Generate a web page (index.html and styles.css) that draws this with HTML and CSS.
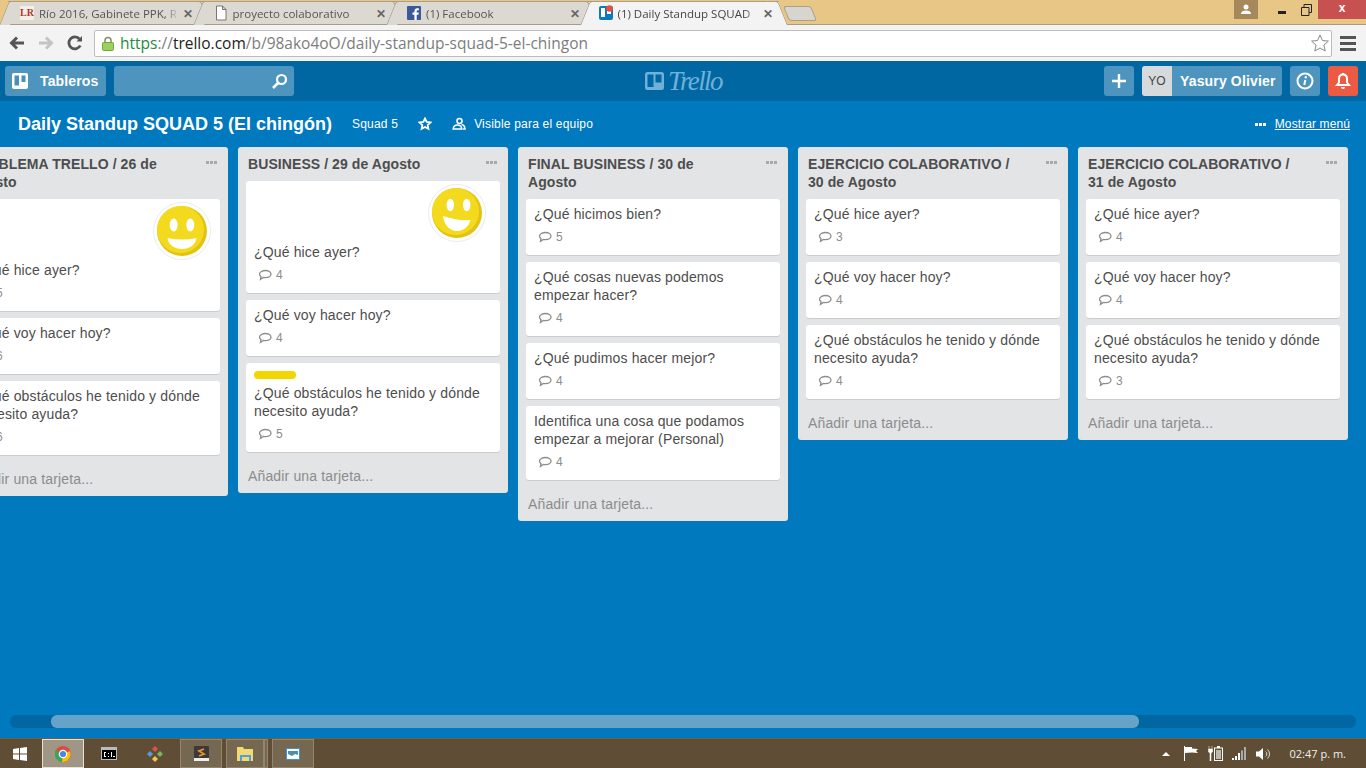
FILE: index.html
```html
<!DOCTYPE html>
<html lang="es">
<head>
    <meta charset="UTF-8">
    <title>Daily Standup SQUAD 5 (El chingón)</title>
    <link rel="stylesheet" href="styles.css">
</head>
<body>

<svg class="defs" width="0" height="0">
    <symbol id="bubble" viewBox="0 0 14 12">
        <path d="M7.500 1.500c3 0 5.500 1.500 5.500 3.600S10.500 8.700 7.500 8.700c-.8 0-1.500-.1-2.200-.3L2.500 10.300l.5-2.700C2 7 1.500 6.100 1.500 5.100c0-2.100 3-3.600 6-3.600z" fill="none" stroke="#8c8c8c" stroke-width="1.300"/>
    </symbol>
    <symbol id="smile-straight" viewBox="0 0 58 58">
        <circle cx="29" cy="29" r="28.500" fill="#fff" stroke="#ececec"/>
        <circle cx="29" cy="29" r="25" fill="#e3c30e"/>
        <circle cx="27.500" cy="27.500" r="23.500" fill="#f4da1f"/>
        <ellipse cx="20.700" cy="23" rx="4" ry="6.500" fill="#fff"/>
        <ellipse cx="37.300" cy="23" rx="4" ry="6.500" fill="#fff"/>
        <path d="M14.500 36q14.500 3 29 0c-1 7-7 11-14.500 11S15.500 43 14.500 36z" fill="#fff"/>
    </symbol>
    <symbol id="smile-tilted" viewBox="0 0 58 58">
        <circle cx="29" cy="29" r="28.500" fill="#fff" stroke="#ececec"/>
        <circle cx="29" cy="29" r="25" fill="#e3c30e"/>
        <circle cx="27.500" cy="27.500" r="23.500" fill="#f4da1f"/>
        <ellipse cx="22.300" cy="21" rx="3.700" ry="6.200" fill="#fff"/>
        <ellipse cx="38.700" cy="21" rx="3.700" ry="6.200" fill="#fff"/>
        <path d="M15 32q14 5 27.500 4c-2 7-7 11-13.500 11C22 47 16 41 15 32z" fill="#fff"/>
    </symbol>
</svg>

<div class="tabstrip">
    <div class="tab">
        <span class="fav fav-lr">LR</span>
        <span class="tab-title">Río 2016, Gabinete PPK, R</span>
        <span class="tab-close">✕</span>
    </div>
    <div class="tab">
        <svg class="fav" viewBox="0 0 14 16"><path d="M2.500 1h6l3.500 3.500V15h-9.500z M8.500 1v3.500H12" fill="#fff" stroke="#777"/></svg>
        <span class="tab-title">proyecto colaborativo</span>
        <span class="tab-close">✕</span>
    </div>
    <div class="tab">
        <svg class="fav" viewBox="0 0 14 14"><rect width="14" height="14" rx="1" fill="#3b5998"/><path d="M9.700 14V8.700h1.800l.3-2.100H9.700V5.300c0-.6.2-1 1-1h1.200V2.400c-.2 0-.9-.1-1.700-.1-1.700 0-2.800 1-2.800 2.900v1.400H5.500v2.100h1.900V14z" fill="#fff"/></svg>
        <span class="tab-title">(1) Facebook</span>
        <span class="tab-close">✕</span>
    </div>
    <div class="tab tab-active">
        <svg class="fav" viewBox="0 0 14 16"><rect y="1" width="14" height="14" rx="2" fill="#0a79bf"/><rect x="2" y="3" width="4" height="9" fill="#fff"/><rect x="8" y="3" width="4" height="6" fill="#fff"/><circle cx="10.500" cy="3.500" r="3.300" fill="#e8503a"/></svg>
        <span class="tab-title">(1) Daily Standup SQUAD</span>
        <span class="tab-close">✕</span>
    </div>
    <div class="newtab"></div>
    <div class="win-controls">
        <div class="win-user"><svg width="12" height="11" viewBox="0 0 12 11"><circle cx="6" cy="3" r="2.500" fill="#fff"/><path d="M1 10c0-2.500 2-3.500 5-3.500s5 1 5 3.500z" fill="#fff"/></svg></div>
        <div class="win-btn"><span class="win-min"></span></div>
        <div class="win-btn"><svg width="11" height="12" viewBox="0 0 11 12"><path d="M.5 3.500h7.500v8H.5z M3 3.500V.5h7.500v8H8" fill="none" stroke="#222"/></svg></div>
        <div class="win-close">x</div>
    </div>
</div>

<div class="toolbar">
    <svg class="nav-icon" viewBox="0 0 16 16"><path d="M15 8H3 M8 2.500L2.500 8 8 13.500" fill="none" stroke="#555" stroke-width="3"/></svg>
    <svg class="nav-icon" viewBox="0 0 16 16"><path d="M1 8h12 M8 2.500L13.500 8 8 13.500" fill="none" stroke="#c4c4c4" stroke-width="3"/></svg>
    <svg class="nav-icon" viewBox="0 0 16 16"><path d="M13.300 10.500A6 6 0 1 1 12.500 4" fill="none" stroke="#555" stroke-width="2.800"/><path d="M9.500 6.500h5.500V1z" fill="#555"/></svg>
    <div class="omnibox">
        <svg class="lock" viewBox="0 0 12 15"><path d="M3 7V4.500a3 3 0 0 1 6 0V7" fill="none" stroke="#8a8a6a" stroke-width="1.500"/><rect x=".5" y="6.500" width="11" height="8" rx="1" fill="#9bd25f" stroke="#6fa63c"/></svg>
        <span class="url"><span class="url-https">https</span><span class="url-dim">://</span><span class="url-host">trello.com</span><span class="url-dim">/b/98ako4oO/daily-standup-squad-5-el-chingon</span></span>
        <svg class="url-star" viewBox="0 0 18 18"><path d="M9 1l2.400 5.500 6 .6-4.500 4 1.300 5.900L9 14l-5.200 3 1.300-5.900-4.500-4 6-.6z" fill="#fff" stroke="#8a8a8a"/></svg>
    </div>
    <div class="menu-btn"><span></span><span></span><span></span></div>
</div>

<header class="topbar">
    <div class="top-left">
        <div class="hbtn hbtn-boards">
            <svg width="16" height="16" viewBox="0 0 16 16"><rect width="16" height="16" rx="2" fill="#fff"/><rect x="2.500" y="2.500" width="4.500" height="10" fill="#4d8fbc"/><rect x="9.500" y="2.500" width="4" height="6.500" fill="#4d8fbc"/></svg>
            <span>Tableros</span>
        </div>
        <div class="hbtn search">
            <svg width="17" height="17" viewBox="0 0 17 17"><circle cx="10.500" cy="6.500" r="4.500" fill="none" stroke="#fff" stroke-width="2.200"/><path d="M7 10l-5 5" stroke="#fff" stroke-width="2.600"/></svg>
        </div>
    </div>
    <div class="logo">
        <svg width="19" height="18" viewBox="0 0 19 18"><rect width="19" height="18" rx="2.500" fill="#6fb1d9"/><rect x="2.500" y="2.500" width="6" height="12.500" fill="#0067a3"/><rect x="10.500" y="2.500" width="6" height="8" fill="#0067a3"/></svg>
        <span class="logo-text">Trello</span>
    </div>
    <div class="top-right">
        <div class="hbtn hbtn-square"><svg width="16" height="16" viewBox="0 0 16 16"><path d="M8 1v14M1 8h14" stroke="#fff" stroke-width="2.400"/></svg></div>
        <div class="hbtn member">
            <span class="avatar">YO</span>
            <span class="member-name">Yasury Olivier</span>
        </div>
        <div class="hbtn hbtn-square"><svg width="18" height="18" viewBox="0 0 18 18"><circle cx="9" cy="9" r="7.500" fill="none" stroke="#fff" stroke-width="2"/><circle cx="9.800" cy="5.300" r="1.200" fill="#fff"/><path d="M9.300 8l-1 5" stroke="#fff" stroke-width="2"/></svg></div>
        <div class="hbtn hbtn-square hbtn-alert"><svg width="16" height="18" viewBox="0 0 16 18"><path d="M8 2.500c2.800 0 4 2 4 4.500v3.500l2 2.500H2l2-2.500V7c0-2.500 1.200-4.500 4-4.500z" fill="none" stroke="#fff" stroke-width="2"/><path d="M6 15h4a2 2 0 0 1-4 0z M7 1h2v2H7z" fill="#fff"/></svg></div>
    </div>
</header>

<main class="board">
    <div class="board-head">
        <h1 class="board-title">Daily Standup SQUAD 5 (El chingón)</h1>
        <span class="board-team">Squad 5</span>
        <svg class="board-star" viewBox="0 0 14 14"><path d="M7 1.500l1.700 3.500 3.800.5-2.800 2.600.7 3.800L7 10l-3.400 1.900.7-3.800L1.500 5.500 5.300 5z" fill="none" stroke="#fff" stroke-width="1.800"/></svg>
        <svg class="board-vis" viewBox="0 0 14 14"><circle cx="7.500" cy="4" r="2.500" fill="none" stroke="#fff" stroke-width="1.600"/><path d="M1.200 12c.3-2.800 2-4 4.300-4s4 1.200 4.300 4z" fill="none" stroke="#fff" stroke-width="1.600"/><path d="M9.500 7.500c2 .2 3.200 1.800 3.500 4.500h-2" fill="none" stroke="#fff" stroke-width="1.600"/></svg>
        <span class="board-vis-text">Visible para el equipo</span>
        <svg class="board-dots" viewBox="0 0 11 3"><path d="M0 0h3v3H0z M4 0h3v3H4z M8 0h3v3H8z" fill="#fff"/></svg>
        <a class="board-menu">Mostrar menú</a>
    </div>

    <div class="lists">
        <section class="list">
            <div class="list-head"><h2>PROBLEMA TRELLO / 26 de Agosto</h2><svg class="list-dots" viewBox="0 0 11 3"><path d="M0 0h3v3H0z M4 0h3v3H4z M8 0h3v3H8z"/></svg></div>
            <article class="card">
                <div class="sticker-row sticker-first"><svg class="sticker"><use href="#smile-straight"/></svg></div>
                <p>¿Qué hice ayer?</p>
                <div class="badge"><svg><use href="#bubble"/></svg>5</div>
            </article>
            <article class="card">
                <p>¿Qué voy hacer hoy?</p>
                <div class="badge"><svg><use href="#bubble"/></svg>6</div>
            </article>
            <article class="card">
                <p>¿Qué obstáculos he tenido y dónde necesito ayuda?</p>
                <div class="badge"><svg><use href="#bubble"/></svg>6</div>
            </article>
            <div class="add-card">Añadir una tarjeta...</div>
        </section>

        <section class="list">
            <div class="list-head"><h2>BUSINESS / 29 de Agosto</h2><svg class="list-dots" viewBox="0 0 11 3"><path d="M0 0h3v3H0z M4 0h3v3H4z M8 0h3v3H8z"/></svg></div>
            <article class="card">
                <div class="sticker-row"><svg class="sticker"><use href="#smile-tilted"/></svg></div>
                <p>¿Qué hice ayer?</p>
                <div class="badge"><svg><use href="#bubble"/></svg>4</div>
            </article>
            <article class="card">
                <p>¿Qué voy hacer hoy?</p>
                <div class="badge"><svg><use href="#bubble"/></svg>4</div>
            </article>
            <article class="card">
                <div class="label"></div>
                <p>¿Qué obstáculos he tenido y dónde necesito ayuda?</p>
                <div class="badge"><svg><use href="#bubble"/></svg>5</div>
            </article>
            <div class="add-card">Añadir una tarjeta...</div>
        </section>

        <section class="list">
            <div class="list-head"><h2>FINAL BUSINESS / 30 de Agosto</h2><svg class="list-dots" viewBox="0 0 11 3"><path d="M0 0h3v3H0z M4 0h3v3H4z M8 0h3v3H8z"/></svg></div>
            <article class="card">
                <p>¿Qué hicimos bien?</p>
                <div class="badge"><svg><use href="#bubble"/></svg>5</div>
            </article>
            <article class="card">
                <p>¿Qué cosas nuevas podemos empezar hacer?</p>
                <div class="badge"><svg><use href="#bubble"/></svg>4</div>
            </article>
            <article class="card">
                <p>¿Qué pudimos hacer mejor?</p>
                <div class="badge"><svg><use href="#bubble"/></svg>4</div>
            </article>
            <article class="card">
                <p>Identifica una cosa que podamos empezar a mejorar (Personal)</p>
                <div class="badge"><svg><use href="#bubble"/></svg>4</div>
            </article>
            <div class="add-card">Añadir una tarjeta...</div>
        </section>

        <section class="list">
            <div class="list-head"><h2>EJERCICIO COLABORATIVO / 30 de Agosto</h2><svg class="list-dots" viewBox="0 0 11 3"><path d="M0 0h3v3H0z M4 0h3v3H4z M8 0h3v3H8z"/></svg></div>
            <article class="card">
                <p>¿Qué hice ayer?</p>
                <div class="badge"><svg><use href="#bubble"/></svg>3</div>
            </article>
            <article class="card">
                <p>¿Qué voy hacer hoy?</p>
                <div class="badge"><svg><use href="#bubble"/></svg>4</div>
            </article>
            <article class="card">
                <p>¿Qué obstáculos he tenido y dónde necesito ayuda?</p>
                <div class="badge"><svg><use href="#bubble"/></svg>4</div>
            </article>
            <div class="add-card">Añadir una tarjeta...</div>
        </section>

        <section class="list">
            <div class="list-head"><h2>EJERCICIO COLABORATIVO / 31 de Agosto</h2><svg class="list-dots" viewBox="0 0 11 3"><path d="M0 0h3v3H0z M4 0h3v3H4z M8 0h3v3H8z"/></svg></div>
            <article class="card">
                <p>¿Qué hice ayer?</p>
                <div class="badge"><svg><use href="#bubble"/></svg>4</div>
            </article>
            <article class="card">
                <p>¿Qué voy hacer hoy?</p>
                <div class="badge"><svg><use href="#bubble"/></svg>4</div>
            </article>
            <article class="card">
                <p>¿Qué obstáculos he tenido y dónde necesito ayuda?</p>
                <div class="badge"><svg><use href="#bubble"/></svg>3</div>
            </article>
            <div class="add-card">Añadir una tarjeta...</div>
        </section>
    </div>

    <div class="scroll-track"><div class="scroll-thumb"></div></div>
</main>

<footer class="taskbar">
    <svg class="start" viewBox="0 0 14 14"><path d="M0 2l6-.9V6.500H0z M7 1l7-1v6.500H7z M0 7.500h6v5.400L0 12z M7 7.500h7V14l-7-1z" fill="#fff"/></svg>
    <div class="task task-active">
        <svg width="16" height="16" viewBox="0 0 16 16"><circle cx="8" cy="8" r="8" fill="#dd4b3e"/><path d="M8 8L1 4a8 8 0 0 0 6 12z" fill="#3aa757"/><path d="M8 8l7-3a8 8 0 0 1-8 11z" fill="#f4c20d"/><circle cx="8" cy="8" r="3.700" fill="#4a86e8" stroke="#fff" stroke-width="1.200"/></svg>
    </div>
    <div class="task task-plain">
        <svg width="16" height="13" viewBox="0 0 16 13"><rect width="16" height="13" fill="#bbb"/><rect x="1" y="3" width="14" height="9" fill="#000"/><path d="M3 5H5V6H4V9H5V10H3z M7 6H8V7H7z M7 9H8V10H7z M10 5H11V10H10z M12 9H14V10H12z" fill="#fff"/></svg>
    </div>
    <div class="task task-plain">
        <svg width="16" height="16" viewBox="0 0 16 16"><path d="M8 0l3 3-3 3-3-3z" fill="#d9534f"/><path d="M3 5l3 3-3 3-3-3z" fill="#5b9bd5"/><path d="M13 5l3 3-3 3-3-3z" fill="#7cb55f"/><path d="M8 10l3 3-3 3-3-3z" fill="#f0c94a"/></svg>
    </div>
    <div class="task task-open task-sublime">
        <svg width="15" height="15" viewBox="0 0 15 15"><rect width="15" height="15" rx="1" fill="#3a3a3a"/><rect y="12" width="15" height="3" fill="#eee"/><path d="M10 3L5 5l5 3-5 2" fill="none" stroke="#e8912d" stroke-width="1.800"/></svg>
    </div>
    <div class="task task-open task-folder">
        <svg width="17" height="16" viewBox="0 0 17 16"><path d="M0 1h6l1 2h9v12H0z" fill="#f3d878"/><path d="M3 15V9h11v6h-2v-4H5v4z" fill="#4da3d9"/></svg>
    </div>
    <div class="task task-open task-stack"></div>
    <div class="task task-open task-last">
        <svg width="14" height="12" viewBox="0 0 14 12"><rect x=".5" y=".5" width="13" height="11" fill="#fff" stroke="#3e8fd6"/><path d="M2 3h10v4l-3-1-3 2-4-2z" fill="#4f8f9f"/></svg>
    </div>
    <div class="tray">
        <span class="tray-caret"></span>
        <svg width="16" height="15" viewBox="0 0 16 15"><path d="M1.500 0v15" stroke="#fff"/><path d="M2 1h7v1.500l6 .5-2 2 2 2-6-.5L2 7z" fill="#fff"/></svg>
        <svg width="15" height="15" viewBox="0 0 15 15"><path d="M1 0v3M4 0v3M.5 3h4v3l-1.500 1v8h-1V7L.5 6z" fill="#fff" stroke="#fff" stroke-width=".5"/><rect x="6.500" y="2" width="8" height="12.500" fill="none" stroke="#fff"/><rect x="9" y="0" width="3" height="2" fill="#fff"/><rect x="8" y="4" width="5" height="9" fill="#fff" opacity=".6"/></svg>
        <svg width="15" height="13" viewBox="0 0 15 13"><path d="M0 11h2v2H0z M3 9h2v4H3z M6 6h2v7H6z" fill="#fff"/><path d="M9 3.500h2V13H9z M12 0h2v13h-2z" fill="#aaa"/></svg>
        <svg width="16" height="14" viewBox="0 0 16 14"><path d="M0 4.500h3L7 1v12L3 9.500H0z" fill="#fff"/><path d="M9.500 4.500a3 3 0 0 1 0 5 M11.500 2.500a6 6 0 0 1 0 9" fill="none" stroke="#ddd"/></svg>
        <span class="clock">02:47 p. m.</span>
    </div>
</footer>

</body>
</html>
```

FILE: styles.css
```css
* {
    box-sizing: border-box;
}

html, body {
    margin: 0;
    padding: 0;
    height: 768px;
    overflow: hidden;
}

body {
    display: flex;
    flex-direction: column;
    font-family: "Liberation Sans", Arial, sans-serif;
    background-color: #0079bf;
}

.defs {
    display: none;
}

/* browser chrome */
.tabstrip {
    height: 25px;
    flex: none;
    display: flex;
    align-items: flex-end;
    background-color: #e8c686;
    padding-left: 8px;
    border-bottom: 1px solid #a89c80;
}

.tab {
    position: relative;
    width: 193.500px;
    height: 24px;
    margin-bottom: -1px;
    display: flex;
    align-items: center;
    padding: 0 9px 0 12px;
    background-color: #dcd9d2;
    border-top: 1px solid #a89f8c;
    border-bottom: 1px solid #a89c80;
    font-family: "Open Sans", sans-serif;
    font-size: 11.500px;
    color: #555;
}

.tab::before, .tab::after {
    content: "";
    position: absolute;
    top: -1px;
    bottom: -1px;
    width: 10px;
    background-color: inherit;
    border-top: 1px solid #a89f8c;
}

.tab::before {
    left: -4px;
    transform: skewX(-22deg);
    border-left: 1px solid #a89f8c;
    border-top-left-radius: 3px;
}

.tab::after {
    right: -4px;
    transform: skewX(22deg);
    border-right: 1px solid #a89f8c;
    border-top-right-radius: 3px;
}

.tab-active {
    background-color: #f3f3f3;
    border-bottom-color: #f3f3f3;
    z-index: 2;
    width: 190px;
    padding: 0 6px 0 10px;
    color: #444;
}

.fav {
    flex: none;
    width: 14px;
    height: 16px;
    position: relative;
    z-index: 1;
    margin-right: 5px;
}

.fav-lr {
    height: 14px;
    font-family: "Liberation Serif", serif;
    font-weight: bold;
    font-size: 10px;
    line-height: 13px;
    text-align: center;
    color: #b9322a;
    background-color: #f1efe9;
}

.tab-title {
    flex: 1;
    white-space: nowrap;
    overflow: hidden;
    position: relative;
    z-index: 1;
    -webkit-mask-image: linear-gradient(to left, transparent, #000 14px);
    mask-image: linear-gradient(to left, transparent, #000 14px);
}

.tab-close {
    flex: none;
    position: relative;
    z-index: 1;
    margin-left: 4px;
    font-size: 12px;
    font-weight: bold;
    color: #666;
}

.newtab {
    width: 28px;
    height: 15px;
    margin: 0 0 3px 7px;
    background-color: #d8d5ce;
    border: 1px solid #a89f8c;
    border-radius: 3px;
    transform: skewX(22deg);
}

.win-controls {
    margin-left: auto;
    align-self: flex-start;
    display: flex;
}

.win-user {
    width: 24px;
    height: 19px;
    margin-right: 12px;
    display: flex;
    align-items: center;
    justify-content: center;
    background-color: #a6895a;
}

.win-btn {
    width: 24px;
    height: 19px;
    display: flex;
    align-items: center;
    justify-content: center;
}

.win-min {
    width: 8px;
    height: 3px;
    margin-top: 5px;
    background-color: #222;
}

.win-close {
    width: 48px;
    height: 19px;
    text-align: center;
    font-size: 12px;
    font-weight: bold;
    line-height: 17px;
    color: #fff;
    background-color: #c75050;
}

.toolbar {
    height: 36px;
    flex: none;
    display: flex;
    align-items: center;
    background-color: #f3f3f3;
    padding: 0 0 0 9px;
}

.nav-icon {
    width: 16px;
    height: 16px;
    margin-right: 13px;
}

.omnibox {
    width: 1238px;
    height: 27px;
    margin-left: -2px;
    display: flex;
    align-items: center;
    padding: 0 2px 0 7px;
    background-color: #fff;
    border: 1px solid #bdbdbd;
    border-radius: 2px;
    font-family: "Open Sans", sans-serif;
    font-size: 15.500px;
}

.lock {
    width: 12px;
    height: 15px;
    margin-right: 6px;
}

.url {
    flex: 1;
    white-space: nowrap;
}

.url-https {
    color: #1e8c3a;
}

.url-dim {
    color: #7d7d7d;
}

.url-host {
    color: #222;
}

.url-star {
    width: 18px;
    height: 18px;
}

.menu-btn {
    width: 16px;
    margin-left: 8px;
    display: flex;
    flex-direction: column;
    gap: 3px;
}

.menu-btn span {
    height: 3px;
    background-color: #555;
}

/* trello header */
.topbar {
    position: relative;
    height: 40px;
    flex: none;
    display: flex;
    align-items: center;
    justify-content: space-between;
    padding: 0 8px 0 5px;
    background-color: #0067a3;
}

.top-left, .top-right {
    display: flex;
    gap: 8px;
}

.hbtn {
    height: 30px;
    display: flex;
    align-items: center;
    border-radius: 3px;
    background-color: #4d95bf;
    color: #fff;
    font-size: 14px;
    font-weight: bold;
    letter-spacing: .15px;
}

.hbtn-boards {
    width: 101px;
    gap: 12px;
    padding-left: 7px;
}

.search {
    width: 180px;
    justify-content: flex-end;
    padding-right: 6px;
}

.hbtn-square {
    width: 30px;
    justify-content: center;
}

.hbtn-alert {
    background-color: #ec5a44;
}

.member {
    width: 140px;
    overflow: hidden;
}

.avatar {
    width: 30px;
    height: 30px;
    line-height: 30px;
    text-align: center;
    font-size: 12px;
    font-weight: normal;
    color: #444;
    background-color: #d6dadc;
}

.member-name {
    margin-left: 8px;
    white-space: nowrap;
}

.logo {
    position: absolute;
    left: 645px;
    top: 8px;
    display: flex;
    align-items: center;
    gap: 4px;
}

.logo-text {
    font-family: "Liberation Serif", serif;
    font-style: italic;
    font-size: 27px;
    line-height: 24px;
    letter-spacing: -1.600px;
    color: #6fb1d9;
}

/* board */
.board {
    flex: 1;
    min-height: 0;
    display: flex;
    flex-direction: column;
    overflow: hidden;
}

.board-head {
    height: 46px;
    flex: none;
    display: flex;
    align-items: center;
    padding: 0 16px 0 18px;
    color: #fff;
    font-size: 12px;
    letter-spacing: .2px;
}

.board-title {
    margin: 0 20px 0 0;
    font-size: 18px;
    font-weight: bold;
    letter-spacing: 0;
}

.board-star {
    width: 14px;
    height: 14px;
    margin: 0 20px 0 20px;
}

.board-vis {
    width: 14px;
    height: 14px;
    margin-right: 8px;
}

.board-dots {
    width: 11px;
    height: 3px;
    margin-left: auto;
    margin-right: 9px;
}

.board-menu {
    text-decoration: underline;
    letter-spacing: .1px;
}

.lists {
    flex: 1;
    min-height: 0;
    display: flex;
    align-items: flex-start;
    gap: 10px;
    margin-left: -42px;
}

.list {
    flex: none;
    width: 270px;
    padding: 0 8px 7px;
    background-color: #e2e4e6;
    border-radius: 3px;
}

.list-head {
    display: flex;
    align-items: flex-start;
    padding: 8px 3px 8px 2px;
}

.list-head h2 {
    flex: 1;
    margin: 0;
    padding-right: 27px;
    font-size: 14px;
    line-height: 18px;
    font-weight: bold;
    letter-spacing: .08px;
    color: #4d4d4d;
}

.list-dots {
    flex: none;
    width: 11px;
    height: 3px;
    margin-top: 6px;
    fill: #a6a8aa;
}

.card {
    margin-bottom: 7px;
    padding: 6px 8px 8px;
    background-color: #fff;
    border-radius: 3px;
    box-shadow: 0 1px 0 #ccc;
    color: #4d4d4d;
}

.card p {
    margin: 0 0 4px;
    font-size: 14px;
    line-height: 18px;
    letter-spacing: .15px;
}

.sticker-row {
    height: 56px;
    display: flex;
    justify-content: flex-end;
    padding-right: 6px;
}

.sticker-first {
    padding-right: 1px;
}

.sticker {
    width: 58px;
    height: 58px;
    margin-top: -3px;
    overflow: visible;
}

.label {
    width: 42px;
    height: 8px;
    margin: 2px 0 5px;
    background-color: #f2d600;
    border-radius: 4px;
}

.badge {
    height: 20px;
    display: flex;
    align-items: center;
    padding-left: 4px;
    font-size: 12px;
    color: #8c8c8c;
}

.badge svg {
    width: 14px;
    height: 12px;
    margin-right: 4px;
}

.add-card {
    padding: 8px 2px 1px;
    margin-top: 2px;
    font-size: 14px;
    line-height: 18px;
    letter-spacing: .15px;
    color: #8c8c8c;
}

.scroll-track {
    height: 13px;
    flex: none;
    margin: 0 10px 10px;
    padding-left: 41px;
    background-color: #0067a3;
    border-radius: 6px;
}

.scroll-thumb {
    width: 1088px;
    height: 13px;
    background-color: #66a3c8;
    border-radius: 6px;
}

/* windows taskbar */
.taskbar {
    height: 30px;
    flex: none;
    display: flex;
    align-items: center;
    background-color: #5f4e35;
    border-top: 1px solid #6e6048;
    padding-left: 13px;
}

.start {
    width: 14px;
    height: 14px;
    margin-right: 15px;
}

.task {
    height: 29px;
    display: flex;
    align-items: center;
    justify-content: center;
}

.task-active {
    width: 42px;
    background-color: #a09686;
    border: 1px solid #e6e2da;
}

.task-plain {
    width: 46px;
}

.task-active + .task-plain {
    margin-left: 2px;
}

.task-open {
    background-color: #766750;
    border: 1px solid #93866f;
}

.task-sublime {
    width: 42px;
    margin-left: 2px;
}

.task-folder {
    width: 38px;
    margin-left: 4px;
}

.task-stack {
    width: 4px;
}

.task-last {
    width: 42px;
    margin-left: 4px;
}

.tray {
    margin-left: auto;
    display: flex;
    align-items: center;
    gap: 9px;
    padding-right: 20px;
    color: #eee;
    font-family: "Open Sans", sans-serif;
    font-size: 11px;
}

.tray-caret {
    width: 0;
    height: 0;
    margin-right: 4px;
    border-left: 4px solid transparent;
    border-right: 4px solid transparent;
    border-bottom: 4px solid #fff;
}

.clock {
    margin-left: 9px;
}
```
